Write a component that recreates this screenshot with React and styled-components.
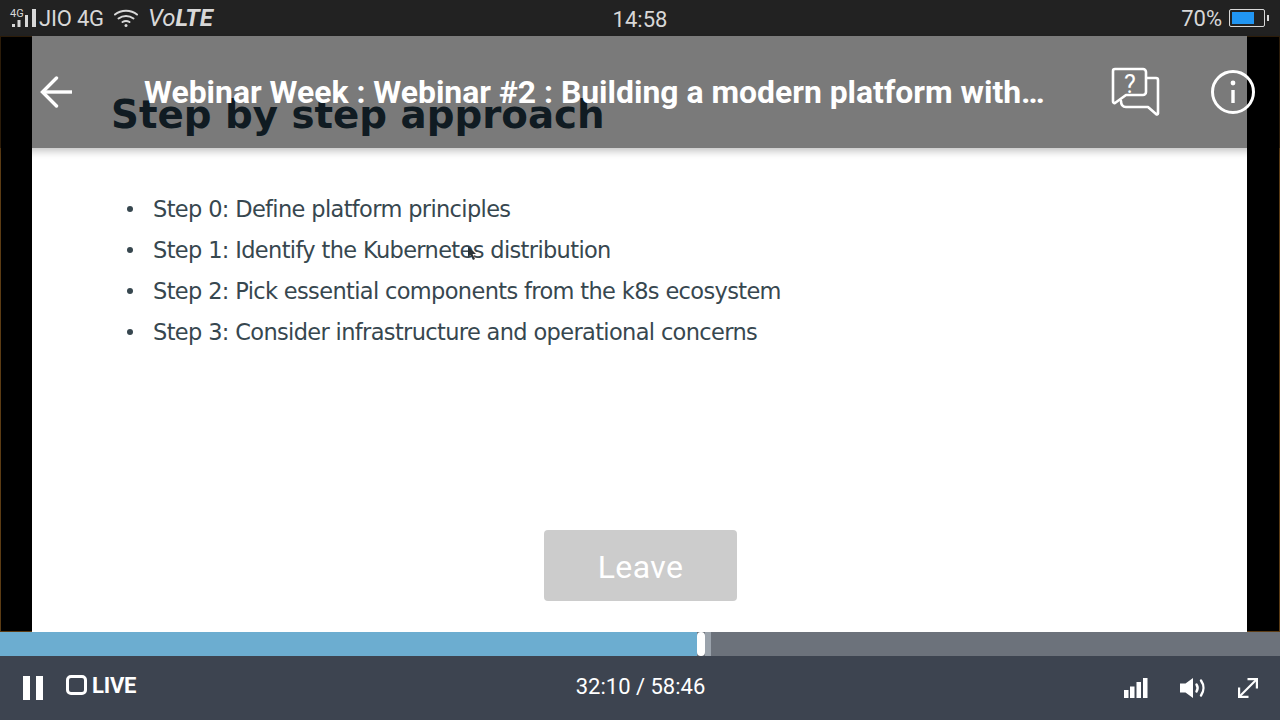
import React from "react";
import styled, { createGlobalStyle } from "styled-components";

const GlobalStyle = createGlobalStyle`
  html, body {
    margin: 0;
    padding: 0;
    width: 1280px;
    height: 720px;
    overflow: hidden;
    background: #000;
    font-family: Roboto, "Liberation Sans", sans-serif;
  }
`;

const steps = [
  "Step 0: Define platform principles",
  "Step 1: Identify the Kubernetes distribution",
  "Step 2: Pick essential components from the k8s ecosystem",
  "Step 3: Consider infrastructure and operational concerns",
];

function SignalIcon() {
  return (
    <svg width="27" height="19" viewBox="0 0 27 19" fill="#d8d8d8">
      <rect x="2" y="15" width="3" height="3" />
      <rect x="7.500" y="11" width="3" height="7" />
      <rect x="15" y="6" width="3" height="12" />
      <rect x="22" y="0" width="4" height="18" />
    </svg>
  );
}

function WifiIcon() {
  return (
    <svg width="24" height="19" viewBox="0 0 24 19" fill="none" stroke="#d8d8d8" strokeWidth="2" strokeLinecap="round">
      <path d="M1 5.500C7 .5 17 .5 23 5.500" />
      <path d="M4.500 9.500C9 6 15 6 19.500 9.500" />
      <path d="M8.500 13C10.500 11.800 13.500 11.800 15.500 13" />
      <circle cx="12" cy="16.500" r="1.500" fill="#d8d8d8" stroke="none" />
    </svg>
  );
}

function BackIcon() {
  return (
    <svg width="34" height="32" viewBox="0 0 34 32" fill="none" stroke="#fff" strokeWidth="3.400" strokeLinecap="round">
      <path d="M32 16H3" strokeLinecap="butt" />
      <path d="M16.500 2L2.500 16l14 14" />
    </svg>
  );
}

function QuestionIcon() {
  return (
    <svg width="50" height="50" viewBox="0 0 50 50" fill="none" stroke="#fff" strokeWidth="2.600" strokeLinejoin="round" strokeLinecap="round">
      <path d="M4 2h28a3 3 0 0 1 3 3v20a3 3 0 0 1-3 3H15l-11 8a1.500 1.500 0 0 1-2-1.500V4a2 2 0 0 1 2-2z" />
      <path d="M36 11h9a2 2 0 0 1 2 2v33.500a1 1 0 0 1-1.700.700L37 40H15c-3 0-5-2-5-6" />
      <text x="19" y="26" fontFamily="Roboto, sans-serif" fontSize="25" fill="#fff" stroke="none" textAnchor="middle">?</text>
    </svg>
  );
}

function InfoIcon() {
  return (
    <svg width="46" height="46" viewBox="0 0 46 46" fill="none" stroke="#fff">
      <circle cx="23" cy="23" r="20.500" strokeWidth="3" />
      <circle cx="23" cy="14" r="2.400" fill="#fff" stroke="none" />
      <path d="M23 21V34" strokeWidth="3.400" />
    </svg>
  );
}

function BarsIcon() {
  return (
    <svg width="24" height="20" viewBox="0 0 24 20" fill="#fff">
      <rect x="0" y="12" width="4.500" height="8" />
      <rect x="6" y="8.500" width="4.500" height="11.500" />
      <rect x="12.500" y="4" width="4.500" height="16" />
      <rect x="19" y="0" width="4.500" height="20" />
    </svg>
  );
}

function VolumeIcon() {
  return (
    <svg width="26" height="20" viewBox="0 0 26 20" fill="none" stroke="#fff" strokeWidth="2.400" strokeLinecap="round">
      <path d="M0 5.500h5.500L13 0v20l-7.500-5.500H0z" fill="#fff" stroke="none" />
      <path d="M16.500 6.500c1.300 2 1.300 5 0 7" />
      <path d="M21 2.500c3.200 4.500 3.200 10.500 0 15" />
    </svg>
  );
}

function ExpandIcon() {
  return (
    <svg width="20" height="20" viewBox="0 0 20 20" fill="none" stroke="#fff" strokeWidth="2.200">
      <path d="M1.500 18.500L18.500 1.500" />
      <path d="M9.500 1.100h9.400v9.400" />
      <path d="M1.100 9.500v9.400h9.400" />
    </svg>
  );
}

function CursorIcon() {
  return (
    <svg width="10" height="14" viewBox="0 0 10 14" fill="#2b3236">
      <path d="M1 0l8 8H5.500L8 13l-2 1-2.500-5L1 11z" />
    </svg>
  );
}

export default function App() {
  return (
    <Screen>
      <GlobalStyle />
      <StatusBar>
        <StatusLeft>
          <SignalWrap>
            <NetworkTag>4G</NetworkTag>
            <SignalIcon />
          </SignalWrap>
          <Carrier>JIO 4G</Carrier>
          <WifiIcon />
          <Volte>
            Vo<b>LTE</b>
          </Volte>
        </StatusLeft>
        <Clock>14:58</Clock>
        <StatusRight>
          <span>70%</span>
          <Battery>
            <BatteryFill $level={72} />
          </Battery>
          <BatteryCap />
        </StatusRight>
      </StatusBar>

      <Stage>
        <Slide>
          <SlideTitle>Step by step approach</SlideTitle>
          <StepList>
            {steps.map((step) => (
              <StepItem key={step}>{step}</StepItem>
            ))}
          </StepList>
          <Cursor>
            <CursorIcon />
          </Cursor>
          <LeaveButton>Leave</LeaveButton>
        </Slide>
        <Header>
          <BackButton>
            <BackIcon />
          </BackButton>
          <HeaderTitle>Webinar Week : Webinar #2 : Building a modern platform with…</HeaderTitle>
          <HeaderActions>
            <QuestionIcon />
            <InfoIcon />
          </HeaderActions>
        </Header>
      </Stage>

      <SeekBar>
        <SeekPlayed $percent={54.45} />
        <SeekHandle />
        <SeekBuffer />
      </SeekBar>

      <Controls>
        <ControlsLeft>
          <PauseButton>
            <PauseBar />
            <PauseBar />
          </PauseButton>
          <LiveBadge>
            <LiveBox />
            LIVE
          </LiveBadge>
        </ControlsLeft>
        <TimeText>32:10 / 58:46</TimeText>
        <ControlsRight>
          <BarsIcon />
          <VolumeIcon />
          <ExpandIcon />
        </ControlsRight>
      </Controls>
    </Screen>
  );
}

const Screen = styled.div`
  width: 1280px;
  height: 720px;
  display: flex;
  flex-direction: column;
  overflow: hidden;
`;

const StatusBar = styled.div`
  height: 36px;
  flex-shrink: 0;
  display: grid;
  grid-template-columns: 1fr auto 1fr;
  align-items: center;
  padding: 0 10px;
  background: #222222;
  color: #d8d8d8;
  font-size: 22px;
`;

const StatusLeft = styled.div`
  display: flex;
  align-items: center;
`;

const SignalWrap = styled.div`
  position: relative;
  width: 29px;
  height: 19px;
  line-height: 0;
`;

const NetworkTag = styled.span`
  position: absolute;
  left: 0;
  top: -1px;
  font-size: 11px;
  line-height: 11px;
`;

const Carrier = styled.span`
  margin-right: 10px;
  letter-spacing: -0.2px;
`;

const Volte = styled.span`
  margin-left: 10px;
  font-size: 24px;
  font-style: italic;

  b {
    font-weight: 700;
  }
`;

const Clock = styled.div`
  margin-top: 2px;
  font-size: 22px;
`;

const StatusRight = styled.div`
  display: flex;
  align-items: center;
  justify-content: flex-end;
  margin-right: 1px;
`;

const Battery = styled.div`
  width: 36px;
  height: 18px;
  margin-left: 7px;
  padding: 2px;
  box-sizing: border-box;
  border: 1px solid #d8d8d8;
  border-radius: 2px;
`;

const BatteryFill = styled.div`
  width: ${(props) => props.$level}%;
  height: 100%;
  background: #2196f3;
`;

const BatteryCap = styled.div`
  width: 2px;
  height: 6px;
  margin-left: 2px;
  background: #d8d8d8;
`;

const Stage = styled.div`
  position: relative;
  height: 596px;
  flex-shrink: 0;
  display: flex;
  padding: 0 33px 0 32px;
  box-sizing: border-box;
  background: #000;

  &::before {
    content: "";
    position: absolute;
    inset: 0;
    border: 1px solid #5c3c14;
  }
`;

const Slide = styled.div`
  position: relative;
  flex: 1;
  display: flex;
  flex-direction: column;
  background: #fff;
  font-family: "DejaVu Sans", sans-serif;
`;

const SlideTitle = styled.h1`
  margin: 52px 0 0 79px;
  font-size: 38.750px;
  line-height: 54px;
  font-weight: 700;
  color: #223a47;
`;

const StepList = styled.ul`
  list-style: none;
  margin: 47px 0 0 121px;
  padding: 0;
`;

const StepItem = styled.li`
  position: relative;
  height: 41px;
  line-height: 41px;
  font-size: 22.500px;
  color: #37474f;
  letter-spacing: -0.65px;
  white-space: nowrap;

  &::before {
    content: "";
    position: absolute;
    left: -26px;
    top: 17px;
    width: 6px;
    height: 6px;
    border-radius: 50%;
    background: #37474f;
  }
`;

const Cursor = styled.div`
  position: absolute;
  left: 435px;
  top: 210px;
  line-height: 0;
`;

const LeaveButton = styled.button`
  align-self: center;
  width: 193px;
  height: 71px;
  margin: auto 0 31px 2px;
  padding: 2px 0 0;
  border: none;
  border-radius: 4px;
  background: #cccccc;
  color: #fff;
  font-family: Roboto, sans-serif;
  font-size: 32px;
  letter-spacing: 0.4px;
`;

const Header = styled.div`
  position: absolute;
  left: 0;
  right: 0;
  top: 0;
  height: 112px;
  display: flex;
  align-items: center;
  background: rgba(0, 0, 0, 0.52);
  box-shadow: 0 3px 8px rgba(0, 0, 0, 0.25);
`;

const BackButton = styled.div`
  width: 144px;
  flex-shrink: 0;
  padding-left: 40px;
  box-sizing: border-box;
  line-height: 0;
`;

const HeaderTitle = styled.div`
  width: 910px;
  color: #fff;
  font-family: Roboto, sans-serif;
  font-size: 31.900px;
  font-weight: 700;
  white-space: nowrap;
`;

const HeaderActions = styled.div`
  display: flex;
  align-items: center;
  gap: 49px;
  margin-left: 57px;
`;

const SeekBar = styled.div`
  height: 24px;
  flex-shrink: 0;
  display: flex;
  align-items: center;
  background: #6c727b;
`;

const SeekPlayed = styled.div`
  width: ${(props) => props.$percent}%;
  height: 100%;
  background: #6cadd0;
`;

const SeekHandle = styled.div`
  width: 8px;
  height: 24px;
  border-radius: 4px;
  background: #fff;
`;

const SeekBuffer = styled.div`
  width: 6px;
  height: 100%;
  background: #9aa2ab;
`;

const Controls = styled.div`
  flex: 1;
  display: grid;
  grid-template-columns: 1fr auto 1fr;
  align-items: center;
  padding: 0 22px 0 23px;
  background: #3d4450;
`;

const ControlsLeft = styled.div`
  display: flex;
  align-items: center;
  gap: 23px;
`;

const PauseButton = styled.div`
  display: flex;
  gap: 6px;
`;

const PauseBar = styled.div`
  width: 7px;
  height: 24px;
  background: #fff;
`;

const LiveBadge = styled.div`
  display: flex;
  align-items: center;
  gap: 5px;
  margin-bottom: 6px;
  color: #fff;
  font-size: 22px;
  font-weight: 700;
  letter-spacing: -0.2px;
`;

const LiveBox = styled.div`
  width: 15px;
  height: 14px;
  border: 3px solid #fff;
  border-radius: 5px;
`;

const TimeText = styled.div`
  margin-bottom: 4px;
  color: #fff;
  font-size: 22px;
`;

const ControlsRight = styled.div`
  display: flex;
  align-items: center;
  justify-content: flex-end;
  gap: 32px;
`;
